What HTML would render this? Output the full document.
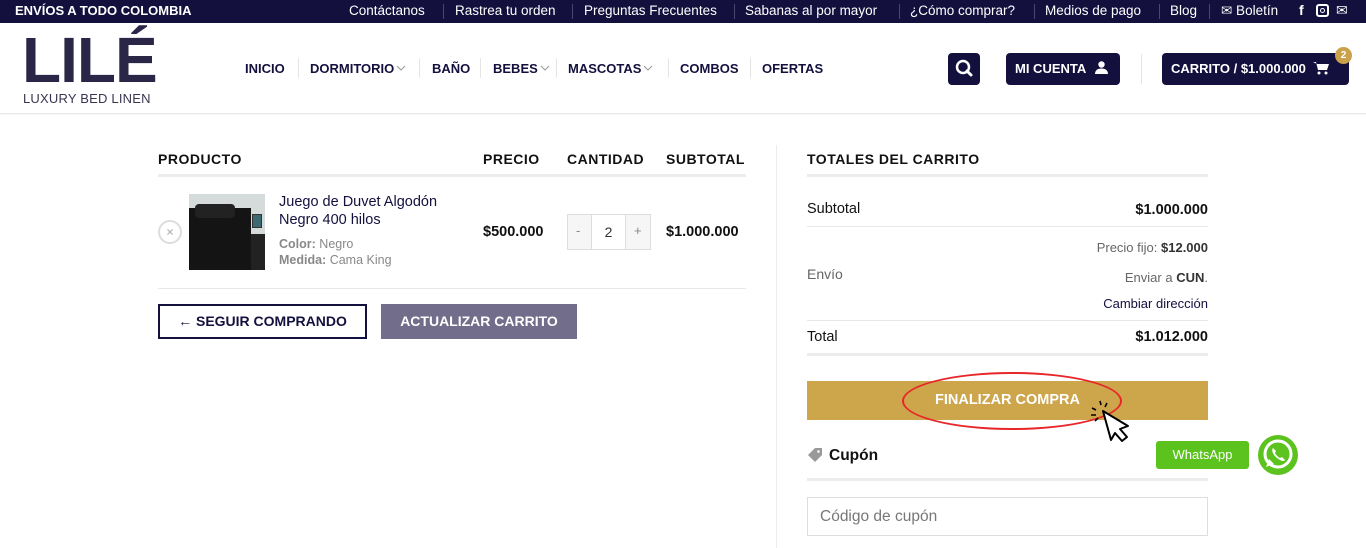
<!DOCTYPE html>
<html><head><meta charset="utf-8">
<style>
*{margin:0;padding:0;box-sizing:border-box}
body{width:1366px;height:548px;overflow:hidden;background:#fff;font-family:"Liberation Sans",sans-serif;color:#111;position:relative}
.a{position:absolute;white-space:nowrap}
.top{position:absolute;left:0;top:0;width:1366px;height:23px;background:#13103e;color:#fff;font-size:13.5px}
.sep{position:absolute;top:4px;width:1px;height:15px;background:#4a476e}
.nav{font-weight:bold;font-size:13px;color:#13103e;top:61px}
.nsep{position:absolute;top:58px;width:1px;height:20px;background:#e5e5e5}
.chev{display:inline-block;vertical-align:2px;margin-left:2px}
.btn{position:absolute;background:#13103e;border-radius:4px;color:#fff;font-weight:bold;font-size:13px}
.th{font-weight:bold;font-size:14px;letter-spacing:.5px;color:#111}
.b{font-weight:bold}
.line{position:absolute;height:1px;background:#e8e8e8}
.thick{position:absolute;height:3px;background:#ececec}
</style></head><body>
<div class="top">
 <div class="a b" style="left:15px;top:3px;font-size:13px">ENVÍOS A TODO COLOMBIA</div>
 <div class="a" style="left:349px;top:3px">Contáctanos</div><div class="sep" style="left:443px"></div>
 <div class="a" style="left:455px;top:3px">Rastrea tu orden</div><div class="sep" style="left:572px"></div>
 <div class="a" style="left:584px;top:3px">Preguntas Frecuentes</div><div class="sep" style="left:734px"></div>
 <div class="a" style="left:745px;top:3px">Sabanas al por mayor</div><div class="sep" style="left:899px"></div>
 <div class="a" style="left:910px;top:3px">¿Cómo comprar?</div><div class="sep" style="left:1034px"></div>
 <div class="a" style="left:1045px;top:3px">Medios de pago</div><div class="sep" style="left:1159px"></div>
 <div class="a" style="left:1170px;top:3px">Blog</div><div class="sep" style="left:1209px"></div>
 <div class="a" style="left:1221px;top:3px">✉ Boletín</div>
 <div class="a b" style="left:1299px;top:2px;font-size:14px">f</div>
 <div class="a" style="left:1316px;top:4px;width:13px;height:13px;border:2px solid #fff;border-radius:3px"><div style="position:absolute;left:2px;top:2px;width:5px;height:5px;border:1.5px solid #fff;border-radius:50%"></div></div>
 <div class="a" style="left:1336px;top:2px;font-size:14px">✉</div>
</div>
<!-- logo -->
<div class="a" style="left:22px;top:28px;font-size:64px;line-height:64px;color:#2a2647;font-weight:bold;letter-spacing:-1px">LILÉ</div>
<div class="a" style="left:23px;top:91px;font-size:13px;color:#3a3650;letter-spacing:.2px">LUXURY BED LINEN</div>
<!-- nav -->
<div class="a nav" style="left:245px">INICIO</div><div class="nsep" style="left:298px"></div>
<div class="a nav" style="left:310px">DORMITORIO<svg class="chev" width="10" height="6" viewBox="0 0 10 6"><path d="M1 1l4 4 4-4" stroke="#999" fill="none"/></svg></div><div class="nsep" style="left:419px"></div>
<div class="a nav" style="left:432px">BAÑO</div><div class="nsep" style="left:480px"></div>
<div class="a nav" style="left:493px">BEBES<svg class="chev" width="10" height="6" viewBox="0 0 10 6"><path d="M1 1l4 4 4-4" stroke="#999" fill="none"/></svg></div><div class="nsep" style="left:556px"></div>
<div class="a nav" style="left:568px">MASCOTAS<svg class="chev" width="10" height="6" viewBox="0 0 10 6"><path d="M1 1l4 4 4-4" stroke="#999" fill="none"/></svg></div><div class="nsep" style="left:668px"></div>
<div class="a nav" style="left:680px">COMBOS</div><div class="nsep" style="left:750px"></div>
<div class="a nav" style="left:762px">OFERTAS</div>
<div class="btn" style="left:948px;top:53px;width:32px;height:32px"><svg width="32" height="32" viewBox="0 0 32 32"><circle cx="15" cy="14" r="6" stroke="#fff" stroke-width="2.5" fill="none"/><path d="M19 18l4 4" stroke="#fff" stroke-width="3" stroke-linecap="round"/></svg></div>
<div class="btn" style="left:1006px;top:53px;width:114px;height:32px;padding:8px 0 0 9px">MI CUENTA <svg width="13" height="13" viewBox="0 0 13 13" style="vertical-align:-1px;margin-left:6px"><circle cx="6.5" cy="3.5" r="3.2" fill="#fff"/><path d="M0 13c0-4 3-5.5 6.5-5.5S13 9 13 13z" fill="#fff"/></svg></div>
<div style="position:absolute;left:1141px;top:54px;width:1px;height:30px;background:#e5e5e5"></div>
<div class="btn" style="left:1162px;top:53px;width:187px;height:32px;padding:8px 0 0 9px">CARRITO / $1.000.000 <svg width="16" height="14" viewBox="0 0 16 14" style="vertical-align:-2px;margin-left:3px"><path d="M0 1h3l2 8h9l2-6H4" fill="#fff"/><circle cx="6" cy="12" r="1.5" fill="#fff"/><circle cx="13" cy="12" r="1.5" fill="#fff"/></svg></div>
<div class="a b" style="left:1335px;top:47px;width:17px;height:17px;border-radius:50%;background:#c9a24b;color:#fff;font-size:10px;text-align:center;line-height:17px">2</div>
<div style="position:absolute;left:0;top:113px;width:1366px;height:2px;background:linear-gradient(#e6e6e6,#fafafa)"></div>
<!-- cart table -->
<div class="a th" style="left:158px;top:151px">PRODUCTO</div>
<div class="a th" style="left:483px;top:151px">PRECIO</div>
<div class="a th" style="left:567px;top:151px">CANTIDAD</div>
<div class="a th" style="left:666px;top:151px">SUBTOTAL</div>
<div class="thick" style="left:158px;top:174px;width:588px"></div>
<div class="a" style="left:158px;top:220px;width:24px;height:24px;border:2px solid #ddd;border-radius:50%;color:#bbb;font-size:12px;font-weight:bold;text-align:center;line-height:20px">×</div>
<div class="a" style="left:189px;top:194px;width:76px;height:76px;background:#d5dada;overflow:hidden">
 <div style="position:absolute;left:0;top:14px;width:62px;height:62px;background:#141414"></div>
 <div style="position:absolute;left:6px;top:10px;width:40px;height:14px;background:#222;border-radius:4px"></div>
 <div style="position:absolute;left:62px;top:40px;width:14px;height:36px;background:#222"></div>
 <div style="position:absolute;left:63px;top:20px;width:10px;height:14px;background:#3d6a70;border:1px solid #333"></div>
</div>
<div class="a" style="left:279px;top:193px;font-size:14.5px;color:#13103e;line-height:18px">Juego de Duvet Algodón<br>Negro 400 hilos</div>
<div class="a" style="left:279px;top:236px;font-size:12.5px;color:#888;line-height:16px"><b>Color:</b> Negro<br><b>Medida:</b> Cama King</div>
<div class="a b" style="left:483px;top:224px;font-size:14.5px">$500.000</div>
<div class="a" style="left:567px;top:214px;width:84px;height:36px;border:1px solid #ddd;background:#f6f6f6"><div style="position:absolute;left:23px;top:0;width:35px;height:34px;background:#fff;border-left:1px solid #ddd;border-right:1px solid #ddd;text-align:center;line-height:34px;font-size:14px;color:#333">2</div><span style="position:absolute;left:8px;top:8px;color:#888;font-size:13px">-</span><span style="position:absolute;left:66px;top:8px;color:#888;font-size:13px">+</span></div>
<div class="a b" style="left:666px;top:224px;font-size:14.5px">$1.000.000</div>
<div class="line" style="left:158px;top:288px;width:588px"></div>
<div class="a b" style="left:158px;top:304px;width:209px;height:35px;border:2px solid #13103e;color:#13103e;font-size:14px;text-align:center;line-height:31px">← SEGUIR COMPRANDO</div>
<div class="a b" style="left:381px;top:304px;width:196px;height:35px;background:#726d8a;color:#fff;font-size:14px;text-align:center;line-height:35px">ACTUALIZAR CARRITO</div>
<!-- totals -->
<div style="position:absolute;left:776px;top:145px;width:1px;height:403px;background:#ececec"></div>
<div class="a th" style="left:807px;top:151px">TOTALES DEL CARRITO</div>
<div class="thick" style="left:807px;top:174px;width:401px"></div>
<div class="a" style="left:807px;top:201px;font-size:14.5px">Subtotal</div>
<div class="a b" style="right:158px;top:202px;font-size:14.5px">$1.000.000</div>
<div class="line" style="left:807px;top:226px;width:401px"></div>
<div class="a" style="right:158px;top:240px;font-size:13px;color:#666">Precio fijo: <b style="color:#333">$12.000</b></div>
<div class="a" style="left:807px;top:266px;font-size:14px;color:#666">Envío</div>
<div class="a" style="right:158px;top:270px;font-size:13px;color:#666">Enviar a <b style="color:#333">CUN</b>.</div>
<div class="a" style="right:158px;top:296px;font-size:13px;color:#13103e">Cambiar dirección</div>
<div class="line" style="left:807px;top:320px;width:401px"></div>
<div class="a" style="left:807px;top:329px;font-size:14.5px">Total</div>
<div class="a b" style="right:158px;top:329px;font-size:14.5px">$1.012.000</div>
<div class="thick" style="left:807px;top:353px;width:401px"></div>
<div class="a b" style="left:807px;top:381px;width:401px;height:39px;background:#cda54a;color:#fff;font-size:14.5px;text-align:center;line-height:39px">FINALIZAR COMPRA</div>
<div class="a" style="left:902px;top:372px;width:220px;height:58px;border:2px solid #e8262a;border-radius:50%"></div>
<svg class="a" style="left:1088px;top:400px" width="50" height="50" viewBox="0 0 50 50"><path d="M15 11 L23 40 L27 33 L34 41 L39 37 L32 29 L40 26 Z" fill="#fff" stroke="#000" stroke-width="2" stroke-linejoin="round"/><path d="M12 1l1 4M4 8l4 2M19 3l-2 4M3 15h5M7 21l3-3" stroke="#000" stroke-width="1.6"/></svg>
<svg class="a" style="left:807px;top:447px" width="16" height="16" viewBox="0 0 16 16"><path d="M1 8 L8 1 H15 V8 L8 15 Z" fill="#999"/><circle cx="11.5" cy="4.5" r="1.3" fill="#fff"/></svg>
<div class="a b" style="left:829px;top:447px;font-size:15.5px">Cupón</div>
<div class="thick" style="left:807px;top:478px;width:401px"></div>
<div class="a" style="left:807px;top:497px;width:401px;height:39px;border:1px solid #ddd;padding:10px 12px;font-size:15.5px;color:#777">Código de cupón</div>
<div class="a" style="left:1156px;top:441px;width:93px;height:28px;background:#5bc21e;border-radius:3px;color:#fff;font-size:13px;text-align:center;line-height:28px">WhatsApp</div>
<svg class="a" style="left:1256px;top:433px" width="44" height="44" viewBox="0 0 44 44"><circle cx="22" cy="22" r="20" fill="#5bc21e"/><circle cx="22" cy="21" r="13" fill="none" stroke="#fff" stroke-width="3"/><path d="M10 34 l3-8 5 5z" fill="#fff"/><path d="M17 15c-2 2 0 7 4 10s7 4 8 2l-3-3-2 1c-2-1-4-3-5-5l1-2-3-3z" fill="#fff"/></svg>
</body></html>
